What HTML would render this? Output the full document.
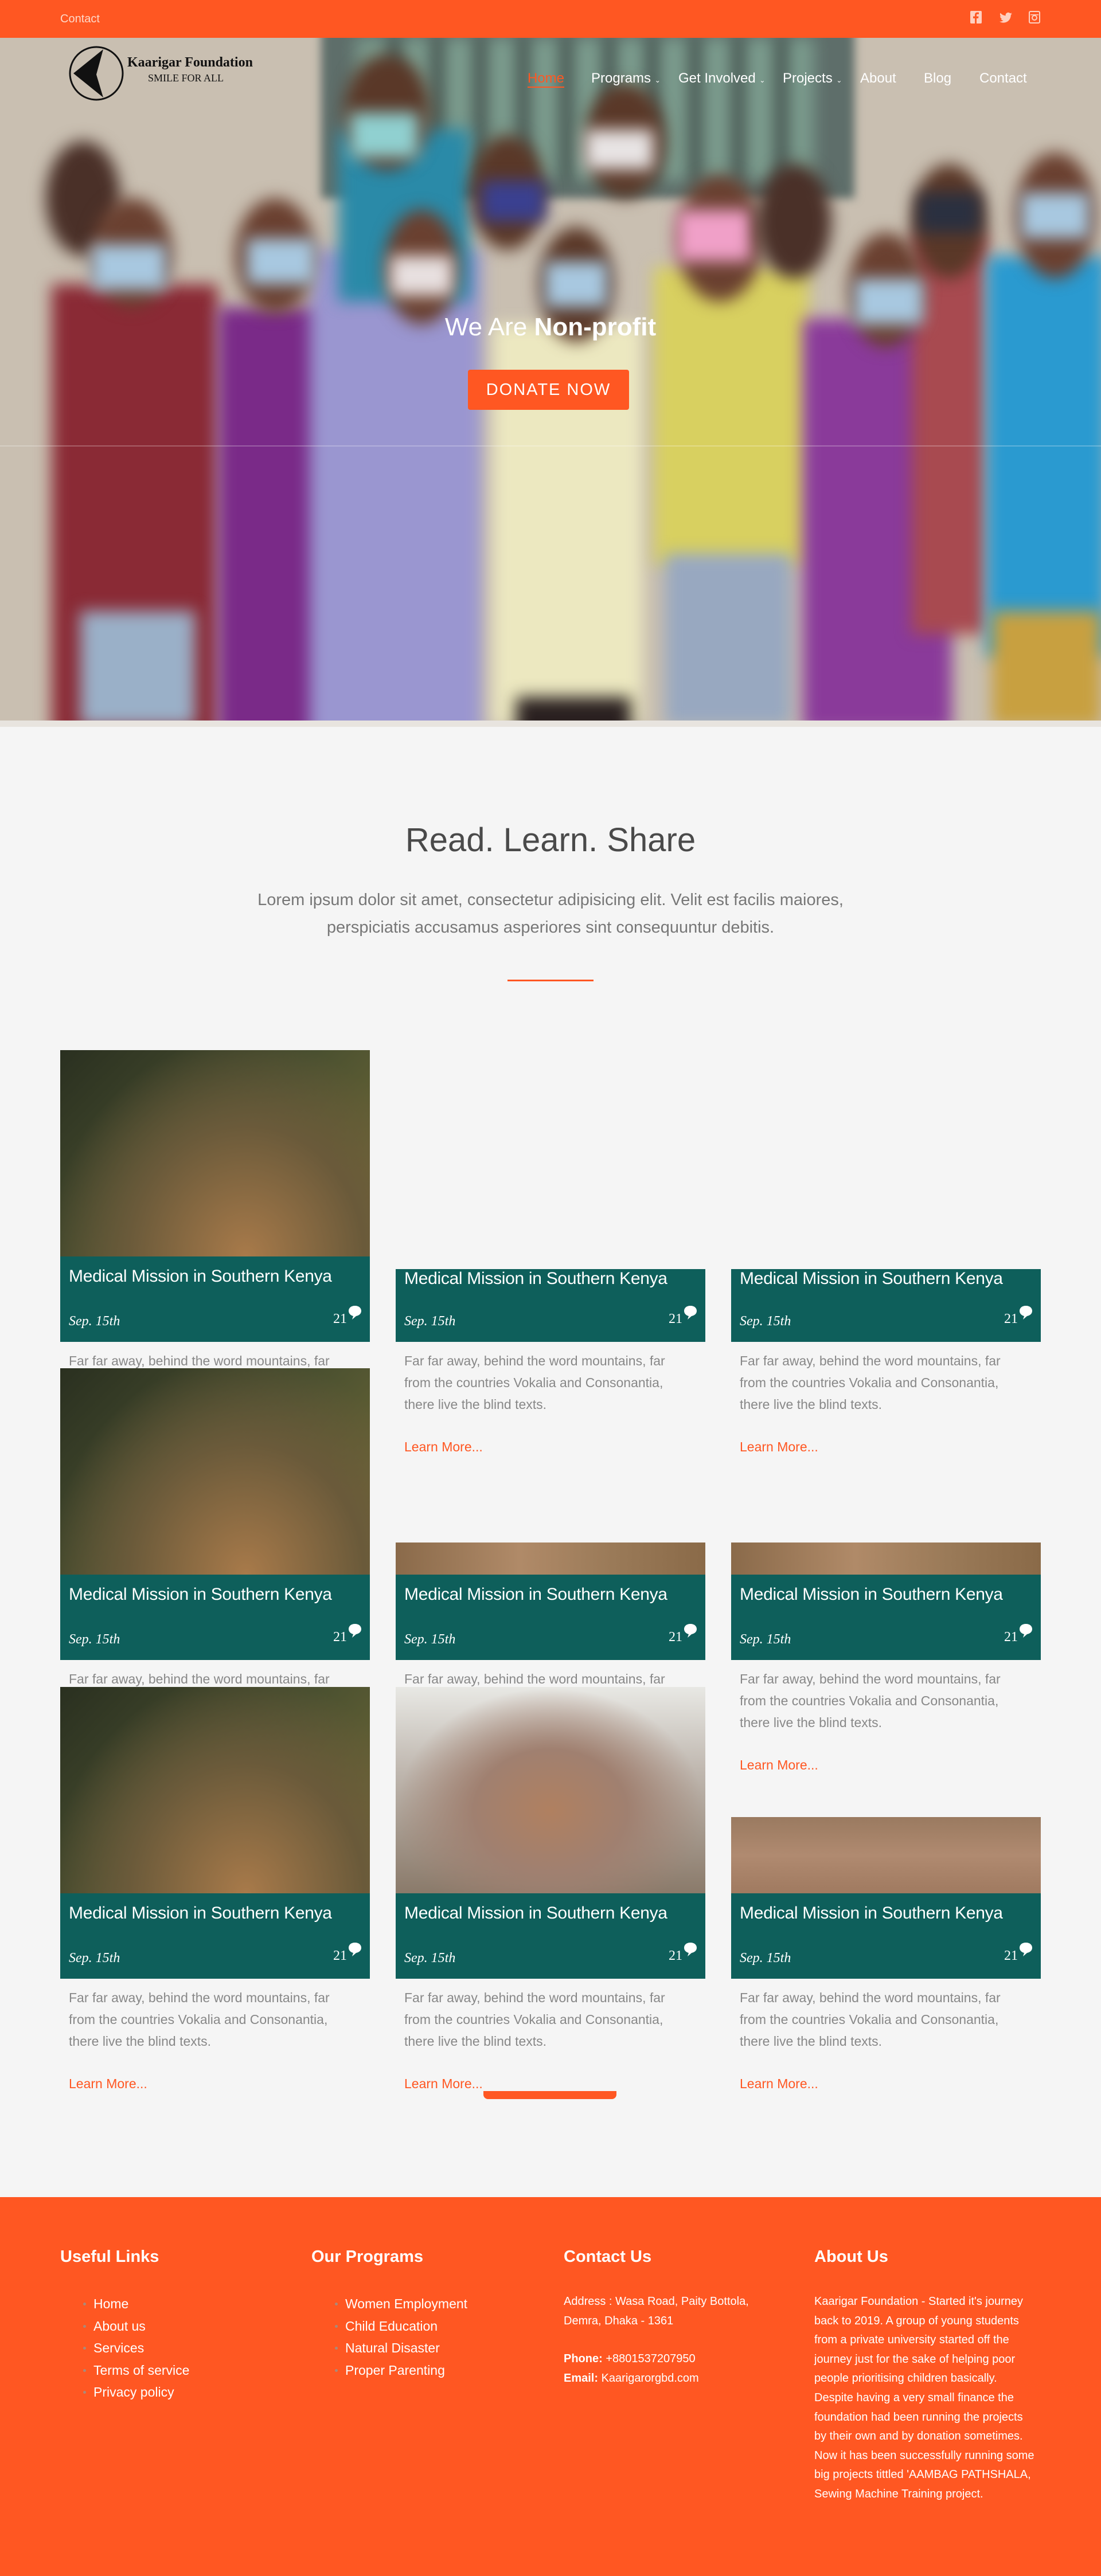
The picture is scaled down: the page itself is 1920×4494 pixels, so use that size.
<!DOCTYPE html>
<html><head><meta charset="utf-8"><style>
*{margin:0;padding:0;box-sizing:border-box}
body{width:1920px;height:4494px;background:#f5f5f5;font-family:"Liberation Sans",sans-serif;position:relative;overflow:hidden}
.a{position:absolute}
.top{left:0;top:0;width:1920px;height:66px;background:#ff5722}
.hero{left:0;top:66px;width:1920px;height:1202px;background:#e8e4df;overflow:hidden}
.hero .img{position:absolute;left:0;top:0;width:1920px;height:1191px;background:#c9bfb1;overflow:hidden}
.b{position:absolute;filter:blur(14px)}
.nav a{position:absolute;top:123px;color:#fff;font-size:24px;text-decoration:none}
.card-img{position:absolute;width:540px}
.teal{position:absolute;width:540px;background:#0e5f5b;color:#fff}
.teal h3{position:absolute;left:15px;top:18px;font-weight:normal;font-size:30px;letter-spacing:-0.3px;white-space:nowrap}
.teal .d{position:absolute;left:15px;bottom:22px;font-family:"Liberation Serif",serif;font-style:italic;font-size:24px}
.teal .c{position:absolute;right:40px;bottom:26px;font-family:"Liberation Serif",serif;font-size:24px}
.teal svg{position:absolute;right:14px;bottom:38px}
.txt{position:absolute;width:475px;color:#888;font-size:23px;line-height:38px}
.lm{position:absolute;color:#ff5722;font-size:23px}
.foot{left:0;top:3833px;width:1920px;height:661px;background:#ff5722;color:#fff}
.foot h4{position:absolute;top:88px;font-size:29px;font-weight:bold}
.foot ul{position:absolute;top:167px;list-style:none}
.foot li{font-size:23px;line-height:38.5px;padding-left:18px;position:relative}
.foot li:before{content:"";position:absolute;left:0;top:17px;width:5px;height:5px;border-radius:50%;background:#aa8a7a}
.foot p{position:absolute;font-size:20px;line-height:33.6px}
</style></head><body>
<div class="a top"></div>
<div class="a" style="left:105px;top:22px;color:#ffd8c8;font-size:20px">Contact</div>
<svg class="a" style="left:1692px;top:19px" width="20" height="22" viewBox="0 0 20 22"><rect width="20" height="22" rx="2" fill="#ffd0c0"/><path d="M11 22V13h3l.5-3.5H11V7.5c0-1 .3-1.7 1.8-1.7H15V2.7c-.4 0-1.5-.2-2.6-.2-2.6 0-4.3 1.6-4.3 4.4v2.6H5V13h3.1v9z" fill="#ff5722"/></svg>
<svg class="a" style="left:1743px;top:21px" width="22" height="20" viewBox="0 0 24 20"><path d="M24 2.4a10 10 0 0 1-2.8.8A5 5 0 0 0 23.3.4a10 10 0 0 1-3.1 1.2A4.9 4.9 0 0 0 11.8 6 14 14 0 0 1 1.7.9a4.9 4.9 0 0 0 1.5 6.6A5 5 0 0 1 1 6.9a4.9 4.9 0 0 0 3.9 4.8 5 5 0 0 1-2.2.1 4.9 4.9 0 0 0 4.6 3.4A9.9 9.9 0 0 1 0 17.2 14 14 0 0 0 7.5 19.4c9.1 0 14-7.5 14-14v-.6A10 10 0 0 0 24 2.4z" fill="#ffd0c0"/></svg>
<svg class="a" style="left:1794px;top:19px" width="20" height="22" viewBox="0 0 20 22"><rect x="1" y="1" width="18" height="20" rx="2" fill="none" stroke="#ffd0c0" stroke-width="2"/><circle cx="10" cy="12" r="4" fill="none" stroke="#ffd0c0" stroke-width="2"/><rect x="3" y="6" width="14" height="1.5" fill="#ffd0c0"/></svg>

<div class="a hero"><div class="img">
<div class="b" style="left:560px;top:-20px;width:930px;height:300px;background:#5e6e6a;filter:blur(8px)"></div>
<div class="b" style="left:620px;top:0;width:800px;height:250px;background:repeating-linear-gradient(90deg,#7a9a8c 0 60px,#2a2f30 60px 75px)"></div>
<div class="b" style="left:90px;top:430px;width:290px;height:800px;background:#8a2a35"></div>
<div class="b" style="left:140px;top:1000px;width:200px;height:200px;background:#9ab0c8"></div>
<div class="b" style="left:380px;top:470px;width:210px;height:760px;background:#7a2a88"></div>
<div class="b" style="left:540px;top:370px;width:300px;height:860px;background:#9a96d0"></div>
<div class="b" style="left:590px;top:160px;width:230px;height:300px;background:#2a8aa8"></div>
<div class="b" style="left:860px;top:500px;width:260px;height:700px;background:#ece8c0"></div>
<div class="b" style="left:900px;top:1150px;width:200px;height:80px;background:#2a2020"></div>
<div class="b" style="left:1140px;top:400px;width:270px;height:520px;background:#d8d060"></div>
<div class="b" style="left:1160px;top:900px;width:220px;height:300px;background:#98a8c0"></div>
<div class="b" style="left:1400px;top:490px;width:260px;height:720px;background:#8a3a9a"></div>
<div class="b" style="left:1590px;top:340px;width:130px;height:700px;background:#a84a50"></div>
<div class="b" style="left:1720px;top:380px;width:210px;height:700px;background:#2a9ad0"></div>
<div class="b" style="left:1730px;top:1000px;width:190px;height:200px;background:#c8a040"></div>
<div class="b" style="left:80px;top:180px;width:130px;height:200px;border-radius:50%;background:#4a3028"></div>
<div class="b" style="left:160px;top:280px;width:140px;height:190px;border-radius:50%;background:#6a4030"></div>
<div class="b" style="left:160px;top:360px;width:130px;height:80px;background:#a8c8e0"></div>
<div class="b" style="left:410px;top:280px;width:140px;height:200px;border-radius:50%;background:#6a4030"></div>
<div class="b" style="left:430px;top:350px;width:120px;height:80px;background:#a8c8e0"></div>
<div class="b" style="left:600px;top:30px;width:150px;height:200px;border-radius:50%;background:#5a3828"></div>
<div class="b" style="left:610px;top:130px;width:120px;height:80px;background:#90d0d0"></div>
<div class="b" style="left:670px;top:300px;width:130px;height:200px;border-radius:50%;background:#6a4030"></div>
<div class="b" style="left:680px;top:380px;width:110px;height:70px;background:#e8e0e0"></div>
<div class="b" style="left:820px;top:170px;width:130px;height:200px;border-radius:50%;background:#5a3828"></div>
<div class="b" style="left:840px;top:250px;width:110px;height:70px;background:#3a4090"></div>
<div class="b" style="left:1020px;top:80px;width:140px;height:200px;border-radius:50%;background:#5a3828"></div>
<div class="b" style="left:1020px;top:160px;width:120px;height:70px;background:#e8e4e4"></div>
<div class="b" style="left:940px;top:330px;width:130px;height:200px;border-radius:50%;background:#5a3828"></div>
<div class="b" style="left:950px;top:390px;width:110px;height:80px;background:#a8c8e0"></div>
<div class="b" style="left:1180px;top:240px;width:150px;height:220px;border-radius:50%;background:#6a4030"></div>
<div class="b" style="left:1180px;top:300px;width:130px;height:90px;background:#f0a0c8"></div>
<div class="b" style="left:1320px;top:220px;width:130px;height:200px;border-radius:50%;background:#4a3028"></div>
<div class="b" style="left:1480px;top:340px;width:130px;height:200px;border-radius:50%;background:#6a4030"></div>
<div class="b" style="left:1490px;top:420px;width:120px;height:80px;background:#a8c8e0"></div>
<div class="b" style="left:1590px;top:220px;width:130px;height:200px;border-radius:50%;background:#5a3828"></div>
<div class="b" style="left:1600px;top:270px;width:110px;height:70px;background:#2a3040"></div>
<div class="b" style="left:1770px;top:200px;width:140px;height:220px;border-radius:50%;background:#6a4030"></div>
<div class="b" style="left:1780px;top:270px;width:120px;height:80px;background:#a8c8e0"></div>
<div class="a" style="left:0;top:711px;width:1920px;height:2px;background:rgba(255,255,255,.25)"></div>
</div></div>

<svg class="a" style="left:118px;top:78px" width="100" height="100" viewBox="0 0 100 100"><circle cx="50" cy="50" r="46" fill="none" stroke="#111" stroke-width="3"/><path d="M62 8 L10 50 L62 92 L50 52 Z" fill="#111"/></svg>
<div class="a" style="left:222px;top:96px;font-family:'Liberation Serif',serif;font-weight:bold;font-size:24px;color:#111">Kaarigar Foundation</div>
<div class="a" style="left:258px;top:126px;font-family:'Liberation Serif',serif;font-size:18px;color:#111">SMILE FOR ALL</div>
<div class="nav">
<a style="left:920px;color:#ff5722;border-bottom:2px solid #ff5722">Home</a>
<a style="left:1031px">Programs <span style="font-size:12px">&#8964;</span></a>
<a style="left:1183px">Get Involved <span style="font-size:12px">&#8964;</span></a>
<a style="left:1365px">Projects <span style="font-size:12px">&#8964;</span></a>
<a style="left:1500px">About</a>
<a style="left:1611px">Blog</a>
<a style="left:1708px">Contact</a>
</div>
<div class="a" style="left:0;top:546px;width:1920px;text-align:center;color:#fff;font-size:44px">We Are <b>Non-profit</b></div>
<div class="a" style="left:816px;top:645px;width:281px;height:70px;background:#ff5722;border-radius:4px;color:#fff;font-size:29px;letter-spacing:2px;text-align:center;line-height:70px">DONATE NOW</div>

<div class="a" style="left:0;top:1432px;width:1920px;text-align:center;color:#4a4a4a;font-size:58px">Read. Learn. Share</div>
<div class="a" style="left:420px;top:1546px;width:1080px;text-align:center;color:#777;font-size:29px;line-height:48px">Lorem ipsum dolor sit amet, consectetur adipisicing elit. Velit est facilis maiores, perspiciatis accusamus asperiores sint consequuntur debitis.</div>
<div class="a" style="left:885px;top:1709px;width:150px;height:3px;background:#ff5722"></div>

<div class="card-img" style="left:105px;top:1832px;height:360px;background:radial-gradient(ellipse at 60% 100%,#a87a4a,#6a5a3a 45%,transparent 75%),linear-gradient(135deg,#2a3020,#4a5030 50%,#7a7038)"></div>
<div class="teal" style="left:105px;top:2192px;height:149px"><h3>Medical Mission in Southern Kenya</h3><span class="d">Sep. 15th</span><span class="c">21</span><svg width="24" height="26" viewBox="0 0 24 26"><path d="M12 1C5 1 1 5 1 10s4 8 8 9l-2 6 7-6c5-1 9-4 9-9S19 1 12 1z" fill="#fff"/></svg></div>
<div class="txt" style="left:120px;top:2355px">Far far away, behind the word mountains, far from the countries Vokalia and Consonantia, there live the blind texts.</div>
<div class="card-img" style="left:105px;top:2387px;height:360px;background:radial-gradient(ellipse at 60% 100%,#a87a4a,#6a5a3a 45%,transparent 75%),linear-gradient(135deg,#2a3020,#4a5030 50%,#7a7038)"></div>
<div class="teal" style="left:105px;top:2747px;height:149px"><h3>Medical Mission in Southern Kenya</h3><span class="d">Sep. 15th</span><span class="c">21</span><svg width="24" height="26" viewBox="0 0 24 26"><path d="M12 1C5 1 1 5 1 10s4 8 8 9l-2 6 7-6c5-1 9-4 9-9S19 1 12 1z" fill="#fff"/></svg></div>
<div class="txt" style="left:120px;top:2910px">Far far away, behind the word mountains, far from the countries Vokalia and Consonantia, there live the blind texts.</div>
<div class="card-img" style="left:105px;top:2943px;height:360px;background:radial-gradient(ellipse at 60% 100%,#a87a4a,#6a5a3a 45%,transparent 75%),linear-gradient(135deg,#2a3020,#4a5030 50%,#7a7038)"></div>
<div class="teal" style="left:105px;top:3303px;height:149px"><h3>Medical Mission in Southern Kenya</h3><span class="d">Sep. 15th</span><span class="c">21</span><svg width="24" height="26" viewBox="0 0 24 26"><path d="M12 1C5 1 1 5 1 10s4 8 8 9l-2 6 7-6c5-1 9-4 9-9S19 1 12 1z" fill="#fff"/></svg></div>
<div class="txt" style="left:120px;top:3466px">Far far away, behind the word mountains, far from the countries Vokalia and Consonantia, there live the blind texts.</div>
<div class="lm" style="left:120px;top:3622px">Learn More...</div>

<div class="teal" style="left:690px;top:2214px;height:127px"><h3 style="top:0">Medical Mission in Southern Kenya</h3><span class="d">Sep. 15th</span><span class="c">21</span><svg width="24" height="26" viewBox="0 0 24 26"><path d="M12 1C5 1 1 5 1 10s4 8 8 9l-2 6 7-6c5-1 9-4 9-9S19 1 12 1z" fill="#fff"/></svg></div>
<div class="txt" style="left:705px;top:2355px">Far far away, behind the word mountains, far from the countries Vokalia and Consonantia, there live the blind texts.</div>
<div class="lm" style="left:705px;top:2511px">Learn More...</div>
<div class="card-img" style="left:690px;top:2691px;height:56px;background:linear-gradient(90deg,#8a6a4a,#b08a68 40%,#9a7a58 70%,#8a6a48)"></div>
<div class="teal" style="left:690px;top:2747px;height:149px"><h3>Medical Mission in Southern Kenya</h3><span class="d">Sep. 15th</span><span class="c">21</span><svg width="24" height="26" viewBox="0 0 24 26"><path d="M12 1C5 1 1 5 1 10s4 8 8 9l-2 6 7-6c5-1 9-4 9-9S19 1 12 1z" fill="#fff"/></svg></div>
<div class="txt" style="left:705px;top:2910px">Far far away, behind the word mountains, far from the countries Vokalia and Consonantia, there live the blind texts.</div>
<div class="card-img" style="left:690px;top:2943px;height:360px;background:radial-gradient(ellipse at 50% 60%,#b08060,#a08070 35%,transparent 70%),linear-gradient(180deg,#e8e8e4,#c0b8b0 40%,#8a7a6a)"></div>
<div class="teal" style="left:690px;top:3303px;height:149px"><h3>Medical Mission in Southern Kenya</h3><span class="d">Sep. 15th</span><span class="c">21</span><svg width="24" height="26" viewBox="0 0 24 26"><path d="M12 1C5 1 1 5 1 10s4 8 8 9l-2 6 7-6c5-1 9-4 9-9S19 1 12 1z" fill="#fff"/></svg></div>
<div class="txt" style="left:705px;top:3466px">Far far away, behind the word mountains, far from the countries Vokalia and Consonantia, there live the blind texts.</div>
<div class="lm" style="left:705px;top:3622px">Learn More...</div>
<div class="a" style="left:843px;top:3648px;width:232px;height:14px;background:#ff5722;border-radius:0 0 8px 8px"></div>

<div class="teal" style="left:1275px;top:2214px;height:127px"><h3 style="top:0">Medical Mission in Southern Kenya</h3><span class="d">Sep. 15th</span><span class="c">21</span><svg width="24" height="26" viewBox="0 0 24 26"><path d="M12 1C5 1 1 5 1 10s4 8 8 9l-2 6 7-6c5-1 9-4 9-9S19 1 12 1z" fill="#fff"/></svg></div>
<div class="txt" style="left:1290px;top:2355px">Far far away, behind the word mountains, far from the countries Vokalia and Consonantia, there live the blind texts.</div>
<div class="lm" style="left:1290px;top:2511px">Learn More...</div>
<div class="card-img" style="left:1275px;top:2691px;height:56px;background:linear-gradient(90deg,#8a6a4a,#b08a68 40%,#9a7a58 70%,#8a6a48)"></div>
<div class="teal" style="left:1275px;top:2747px;height:149px"><h3>Medical Mission in Southern Kenya</h3><span class="d">Sep. 15th</span><span class="c">21</span><svg width="24" height="26" viewBox="0 0 24 26"><path d="M12 1C5 1 1 5 1 10s4 8 8 9l-2 6 7-6c5-1 9-4 9-9S19 1 12 1z" fill="#fff"/></svg></div>
<div class="txt" style="left:1290px;top:2910px">Far far away, behind the word mountains, far from the countries Vokalia and Consonantia, there live the blind texts.</div>
<div class="lm" style="left:1290px;top:3066px">Learn More...</div>
<div class="card-img" style="left:1275px;top:3170px;height:133px;background:linear-gradient(180deg,#9a7a60,#b08a70 50%,#a07a60)"></div>
<div class="teal" style="left:1275px;top:3303px;height:149px"><h3>Medical Mission in Southern Kenya</h3><span class="d">Sep. 15th</span><span class="c">21</span><svg width="24" height="26" viewBox="0 0 24 26"><path d="M12 1C5 1 1 5 1 10s4 8 8 9l-2 6 7-6c5-1 9-4 9-9S19 1 12 1z" fill="#fff"/></svg></div>
<div class="txt" style="left:1290px;top:3466px">Far far away, behind the word mountains, far from the countries Vokalia and Consonantia, there live the blind texts.</div>
<div class="lm" style="left:1290px;top:3622px">Learn More...</div>

<div class="a foot">
<h4 style="left:105px">Useful Links</h4>
<h4 style="left:543px">Our Programs</h4>
<h4 style="left:983px">Contact Us</h4>
<h4 style="left:1420px">About Us</h4>
<ul style="left:145px"><li>Home</li><li>About us</li><li>Services</li><li>Terms of service</li><li>Privacy policy</li></ul>
<ul style="left:584px"><li>Women Employment</li><li>Child Education</li><li>Natural Disaster</li><li>Proper Parenting</li></ul>
<p style="left:983px;top:166px;width:360px">Address : Wasa Road, Paity Bottola, Demra, Dhaka - 1361</p>
<p style="left:983px;top:266px;width:420px"><b>Phone:</b> +8801537207950<br><b>Email:</b> Kaarigarorgbd.com</p>
<p style="left:1420px;top:166px;width:385px">Kaarigar Foundation - Started it's journey back to 2019. A group of young students from a private university started off the journey just for the sake of helping poor people prioritising children basically. Despite having a very small finance the foundation had been running the projects by their own and by donation sometimes. Now it has been successfully running some big projects tittled 'AAMBAG PATHSHALA, Sewing Machine Training project.</p>
</div>
</body></html>
